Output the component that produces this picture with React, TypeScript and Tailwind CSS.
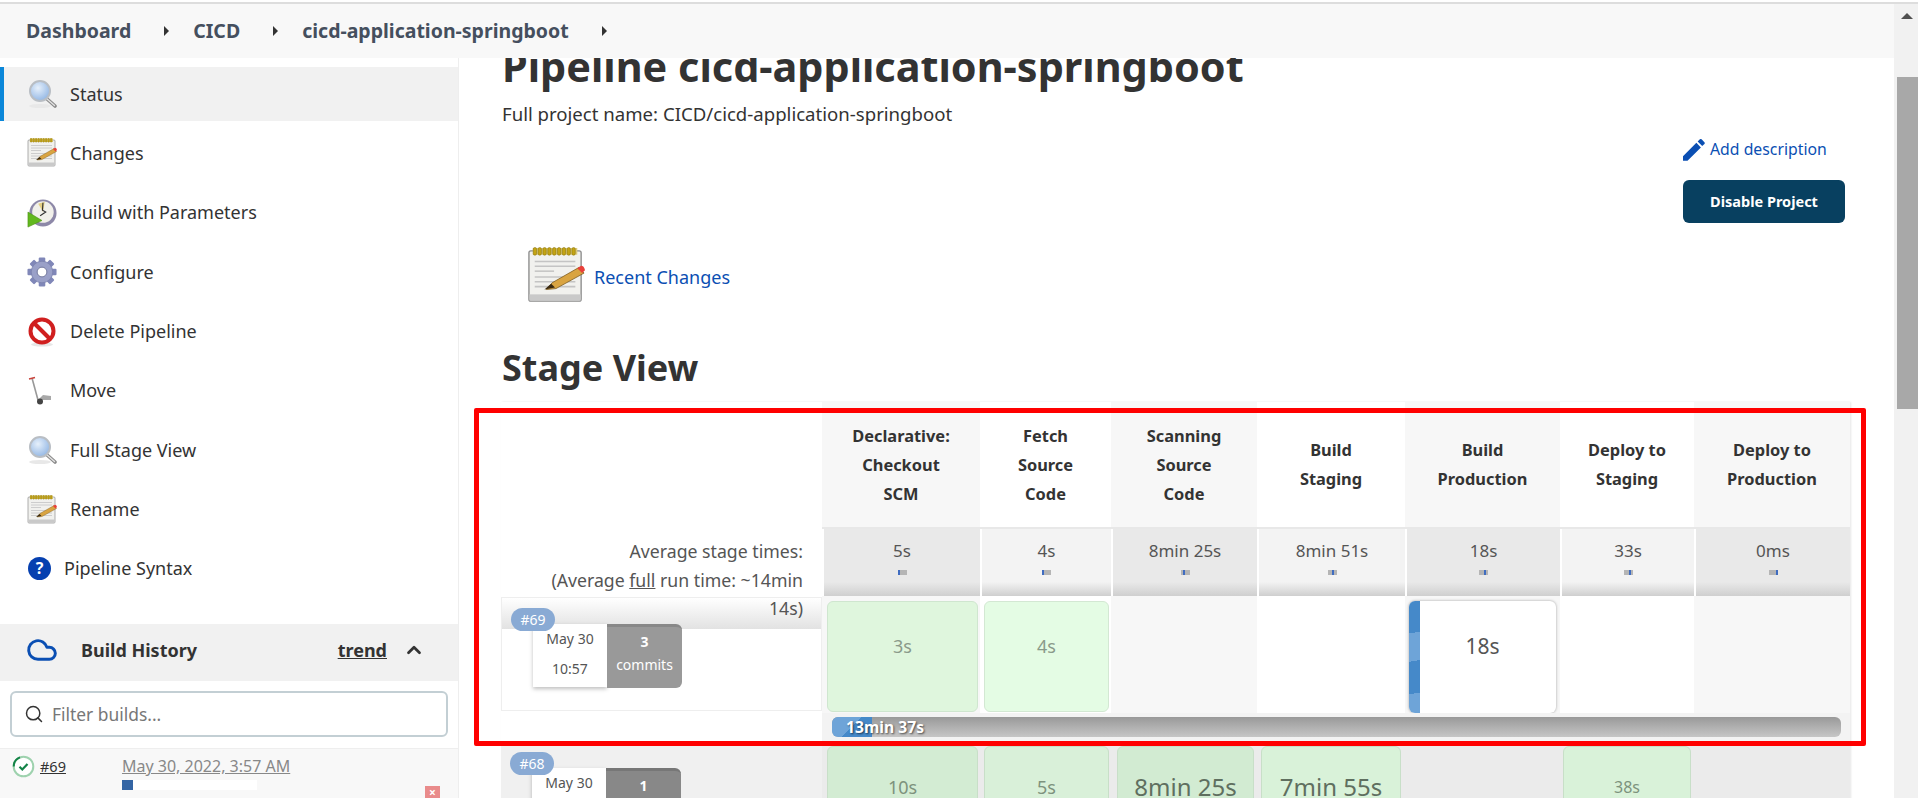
import React from 'react';
import { ChevronUp, Cloud, Search } from 'lucide-react';

const MagnifierIcon = () => (
  <svg width="30" height="30" viewBox="0 0 30 30">
    <defs>
      <radialGradient id="lens" cx="40%" cy="35%" r="70%">
        <stop offset="0%" stopColor="#e6f0fb" />
        <stop offset="100%" stopColor="#8fb4e3" />
      </radialGradient>
    </defs>
    <ellipse cx="13" cy="27" rx="11" ry="2" fill="#e8e8e8" />
    <line x1="19" y1="19" x2="28" y2="27" stroke="#8a8a8a" strokeWidth="3.6" strokeLinecap="round" />
    <line x1="19.5" y1="19.5" x2="27.5" y2="26.5" stroke="#e2e2e2" strokeWidth="1.4" strokeLinecap="round" />
    <circle cx="13" cy="12" r="10" fill="url(#lens)" stroke="#b9bec4" strokeWidth="2" />
  </svg>
);

const NotepadIcon = ({ size = 30 }: { size?: number }) => (
  <svg width={size} height={size} viewBox="0 0 60 60">
    <rect x="2" y="4" width="54" height="52" rx="2" fill="#f1f1ee" stroke="#8c8c8c" strokeWidth="1.4" />
    <rect x="2.5" y="49" width="53" height="6.5" fill="#c9c9c9" />
    <rect x="6" y="1" width="46" height="7" fill="#d9c878" />
    {[8, 13, 18, 23, 28, 33, 38, 43, 48].map((x) => (
      <rect key={x} x={x - 1.5} y="0.5" width="3.4" height="8" rx="1.6" fill="#c4a413" stroke="#7f6b0c" strokeWidth="0.5" />
    ))}
    {[15, 20, 31, 36, 41].map((y) => (
      <line key={y} x1="8" y1={y} x2="50" y2={y} stroke="#c4c4c4" strokeWidth="1.6" />
    ))}
    <line x1="8" y1="25" x2="28" y2="25" stroke="#c4c4c4" strokeWidth="1.6" />
    <path d="M20 44 L26 37 L54 21 L59 27 L30 43 Z" fill="#d9a441" stroke="#7b5a1c" strokeWidth="0.8" />
    <path d="M18 44 L25 38 L29 42 Z" fill="#3a2a12" />
    <path d="M52 22 L56 19.5 Q59 19.5 60 24 L57 27 Z" fill="#e8403a" />
  </svg>
);

const ClockIcon = () => (
  <svg width="32" height="32" viewBox="0 0 32 32">
    <circle cx="17" cy="16" r="14.5" fill="#8d88a8" />
    <circle cx="17" cy="15" r="11.5" fill="#f1f0ea" />
    <path d="M17 15 L12 6 L19 4 Z" fill="#e4cf83" />
    <path d="M17 5 L16.5 13 L20 15 L14 19" fill="none" stroke="#333" strokeWidth="1.2" />
    <path d="M1 15 L16 24 L1 31 Z" fill="#62b81e" stroke="#4c8f14" strokeWidth="0.6" />
  </svg>
);

const GearIcon = () => (
  <svg width="32" height="32" viewBox="0 0 32 32">
    {[0, 45, 90, 135, 180, 225, 270, 315].map((a) => (
      <rect key={a} x="12.5" y="0.5" width="7" height="8" rx="1.2" fill="#8087b8" transform={`rotate(${a} 16 16)`} />
    ))}
    <circle cx="16" cy="16" r="11.5" fill="#9aa0c8" stroke="#7a80ac" strokeWidth="0.8" />
    <circle cx="16" cy="16" r="5.2" fill="#fff" stroke="#6d7299" strokeWidth="1" />
  </svg>
);

const NoEntryIcon = () => (
  <svg width="30" height="30" viewBox="0 0 30 30">
    <ellipse cx="15" cy="27.5" rx="11" ry="2" fill="#e6e6e6" />
    <circle cx="15" cy="14" r="11.5" fill="#fff" stroke="#d01f1f" strokeWidth="4" />
    <line x1="7" y1="6" x2="23" y2="22" stroke="#d01f1f" strokeWidth="4" />
  </svg>
);

const MoveIcon = () => (
  <svg width="30" height="30" viewBox="0 0 30 30">
    <path d="M5 2 L11 24" stroke="#999" strokeWidth="1.6" fill="none" />
    <path d="M2 3 L8 1.5" stroke="#c8423a" strokeWidth="1.8" />
    <path d="M11 24 L24 24 L24 20 L16 19 Z" fill="#a8a8a8" />
    <circle cx="13" cy="25.5" r="3" fill="#444" />
  </svg>
);

const CheckIcon = () => (
  <svg width="23" height="23" viewBox="0 0 23 23">
    <circle cx="11.5" cy="11.5" r="9.8" fill="#fff" stroke="#9ed2ae" strokeWidth="2" />
    <path d="M1.7 11.5 A9.8 9.8 0 0 1 8 2.4" fill="none" stroke="#138347" strokeWidth="2" />
    <path d="M7.5 11.8 L10.3 14.5 L15.5 9" fill="none" stroke="#138347" strokeWidth="2.2" />
  </svg>
);

const PencilIcon = () => (
  <svg width="22" height="22" viewBox="3 3 18.2 18.2" fill="#0b4fb3">
    <path d="M3 17.25V21h3.75L17.81 9.94l-3.75-3.75L3 17.25zM20.71 7.04a1 1 0 0 0 0-1.41l-2.34-2.34a1 1 0 0 0-1.41 0l-1.83 1.83 3.75 3.75 1.83-1.83z" />
  </svg>
);

const Arrow = () => <span className="ml-[33px] mr-[24px] h-0 w-0 border-y-[5px] border-l-[5px] border-y-transparent border-l-[#333]" />;

const navItems = [
  { label: 'Status', icon: <MagnifierIcon />, active: true },
  { label: 'Changes', icon: <NotepadIcon /> },
  { label: 'Build with Parameters', icon: <ClockIcon /> },
  { label: 'Configure', icon: <GearIcon /> },
  { label: 'Delete Pipeline', icon: <NoEntryIcon /> },
  { label: 'Move', icon: <MoveIcon /> },
  { label: 'Full Stage View', icon: <MagnifierIcon /> },
  { label: 'Rename', icon: <NotepadIcon /> },
];

const stages = [
  { name: ['Declarative:', 'Checkout', 'SCM'], avg: '5s', blue: 0, tall: true },
  { name: ['Fetch', 'Source', 'Code'], avg: '4s', blue: 0, tall: true },
  { name: ['Scanning', 'Source', 'Code'], avg: '8min 25s', blue: 30, tall: true },
  { name: ['Build', 'Staging'], avg: '8min 51s', blue: 45 },
  { name: ['Build', 'Production'], avg: '18s', blue: 50 },
  { name: ['Deploy to', 'Staging'], avg: '33s', blue: 60 },
  { name: ['Deploy to', 'Production'], avg: '0ms', blue: 85 },
];

const previousRow = [
  { text: '10s', bg: 'bg-[#d3ecd3] text-[#7d927d] text-[18px] ml-[5px] mr-[2px]' },
  { text: '5s', bg: 'bg-[#d9f0d9] text-[#7d927d] text-[18px] ml-[4px] mr-[2px]' },
  { text: '8min 25s', bg: 'bg-[#d2ebd2] text-[#5f6f5f] text-[24px] ml-[6px] mr-[3px]' },
  { text: '7min 55s', bg: 'bg-[#d9f2d9] text-[#5f6f5f] text-[24px] mx-[4px]' },
  null,
  { text: '38s', bg: 'bg-[#d9f2d9] text-[#7d927d] text-[16px] mx-[3px]' },
  null,
];

function Sidebar() {
  return (
    <aside className="flex w-[459px] shrink-0 flex-col border-r border-[#eee] bg-white">
      <nav className="flex flex-col gap-[5.4px] pt-[9px]">
        {navItems.map((item) => (
          <a
            key={item.label}
            className={`flex h-[54px] items-center gap-[13px] border-l-4 pl-[23px] text-[18px] text-[#333] ${
              item.active ? 'border-[#0b87d9] bg-[#f1f1f1]' : 'border-transparent'
            }`}
          >
            <span className="flex w-[30px] justify-center">{item.icon}</span>
            {item.label}
          </a>
        ))}
        <a className="flex h-[54px] items-center gap-[13px] pb-[2px] pl-[28px] text-[18px] text-[#333]">
          <span className="flex h-[23px] w-[23px] items-center justify-center rounded-full bg-[#0640b0] text-[16px] font-bold text-white">?</span>
          Pipeline Syntax
        </a>
      </nav>

      <div className="mt-[28px] flex h-[57px] shrink-0 items-center bg-[#f1f1f1] pb-[5px] pl-[26px]">
        <Cloud className="h-[32px] w-[32px] text-[#0b4fb3]" strokeWidth={2.2} />
        <span className="ml-[23px] text-[18px] font-bold text-[#333]">Build History</span>
        <span className="ml-auto text-[18px] font-bold text-[#333] underline">trend</span>
        <ChevronUp className="ml-[16px] mr-[33px] h-[22px] w-[22px] text-[#333]" strokeWidth={3} />
      </div>

      <div className="mx-[10px] mt-[10px] flex h-[46px] shrink-0 items-center gap-[8px] rounded-md border-2 border-[#c3cfd4] pl-[12px] text-[17.4px] text-[#777]">
        <Search className="h-[20px] w-[20px] text-[#333]" strokeWidth={1.8} />
        Filter builds...
      </div>

      <div className="mt-[11px] flex flex-1 border-t border-[#eee] bg-[#f8f8f8] pl-[12px] pt-[6px]">
        <CheckIcon />
        <a className="ml-[5px] mt-[1px] h-fit text-[14.5px] text-[#333] underline">#69</a>
        <div className="ml-[56px] flex w-[167px] flex-col">
          <a className="whitespace-nowrap text-[16px] leading-[22px] text-[#888] underline">May 30, 2022, 3:57 AM</a>
          <div className="mt-[3px] h-[10px] w-[135px] bg-white">
            <div className="h-full w-[11px] bg-[#3465a4]" />
          </div>
        </div>
        <div className="ml-[136px] mt-[31px] flex h-[14px] w-[15px] items-center justify-center bg-[#e98b8b] text-[12px] font-bold leading-none text-white">×</div>
      </div>
    </aside>
  );
}

function BuildCard({ build, commits, label, dark }: { build: string; commits: string; label?: string; dark?: boolean }) {
  return (
    <>
      <span className="absolute left-[9px] top-[10px] z-10 flex h-[23px] w-[44px] items-center justify-center rounded-full bg-[#89aad4] text-[14px] text-white">
        {build}
      </span>
      <div className="ml-[31px] flex w-fit">
        <div className="flex h-[63px] w-[74px] flex-col items-center bg-white text-[14px] leading-[30px] text-[#555] shadow-[0_2px_4px_rgba(0,0,0,0.25)]">
          <span>May 30</span>
          <span>10:57</span>
        </div>
        <div
          className={`flex h-[64px] w-[75px] flex-col items-center rounded-r-md border-t-[3px] pt-[3px] text-white ${
            dark ? 'border-[#777] bg-[#888]' : 'border-[#888] bg-[#999]'
          }`}
        >
          <span className="text-[14px] font-bold leading-[24px]">{commits}</span>
          {label && <span className="text-[14px] leading-[22px]">{label}</span>}
        </div>
      </div>
    </>
  );
}

function StageTable() {
  return (
    <div className="relative ml-[-1px] mt-[10px] grid w-[1349px] grid-cols-[321px_158px_131px_146px_148px_155px_134px_156px] grid-rows-[127px_67px_117px_28px_60px] shadow-[1px_0_2px_rgba(0,0,0,0.1)]">
      {/* header row */}
      <div />
      {stages.map((s, i) => (
        <div
          key={s.name.join()}
          className={`flex flex-col items-center border-b-2 border-[#e8e8e8] text-[16.4px] font-bold leading-[29px] text-[#333] ${
            i % 2 === 0 ? 'bg-[#f7f7f7]' : 'bg-white'
          } ${s.tall ? 'pt-[19px]' : 'pt-[33px]'}`}
        >
          {s.name.map((line) => (
            <span key={line}>{line}</span>
          ))}
        </div>
      ))}

      {/* averages */}
      <div className="relative z-10 whitespace-nowrap pr-[19px] pt-[8px] text-right text-[17.7px] leading-[28.5px] text-[#555]">
        Average stage times:
        <br />
        (Average <span className="underline">full</span> run time: ~14min
        <br />
        14s)
      </div>
      {stages.map((s, i) => (
        <div
          key={s.avg}
          className={`ml-[2px] flex flex-col items-center bg-[linear-gradient(to_bottom,transparent,#cfcfcf)] bg-[length:100%_14px] bg-bottom bg-no-repeat pt-[10px] text-[17px] leading-[24px] text-[#555] ${
            i % 2 === 0 ? 'bg-[#e9e9e9]' : 'bg-[#f3f3f3]'
          }`}
        >
          {s.avg}
          <div className="relative mt-[7px] h-[5px] w-[9px] overflow-hidden bg-[#b5b5b5]">
            <div className="absolute top-0 h-full w-[2px] bg-[#3f6cc0]" style={{ left: `${s.blue}%` }} />
          </div>
        </div>
      ))}

      {/* build 69 */}
      <div className="pt-[1px]">
        <div className="relative h-[114px] border border-[#eee] bg-[linear-gradient(to_bottom,#fff,#e2e2e2)] bg-[length:100%_31px] bg-no-repeat pt-[26px]">
          <BuildCard build="#69" commits="3" label="commits" />
        </div>
      </div>
      <div className="bg-[#f7f7f7] pl-[5px] pr-[2px] pt-[5px]">
        <div className="flex h-[111px] w-full justify-center rounded-md border border-[#cfe6cf] bg-[#dff6dd] pt-[31px] text-[18px] text-[#8a9a8a]">3s</div>
      </div>
      <div className="bg-white pl-[4px] pr-[2px] pt-[5px]">
        <div className="flex h-[111px] w-full justify-center rounded-md border border-[#d3e8d3] bg-[#e4fce4] pt-[31px] text-[18px] text-[#8a9a8a]">4s</div>
      </div>
      <div className="bg-[#f7f7f7]" />
      <div className="bg-white" />
      <div className="bg-[#f7f7f7] px-[4px] pt-[5px]">
        <div className="flex h-[112px] overflow-hidden rounded-md bg-white shadow-[0_0_3px_rgba(0,0,0,0.35)]">
          <div className="h-full w-[11px] shrink-0 bg-[repeating-linear-gradient(170deg,#4589c9_0px,#4589c9_32px,#6ea4d8_32px,#6ea4d8_60px)]" />
          <div className="flex flex-1 justify-center pr-[11px] pt-[30px] text-[21px] text-[#555]">18s</div>
        </div>
      </div>
      <div className="bg-white" />
      <div className="bg-[#f7f7f7]" />

      {/* progress */}
      <div />
      <div className="col-span-7 bg-[#f3f3f3] pl-[10px] pr-[9px] pt-[4px]">
        <div className="relative h-[20px] overflow-hidden rounded-md bg-[linear-gradient(to_bottom,#999,#c6c6c6)]">
          <div className="h-full w-[40px] bg-[linear-gradient(135deg,#6ea4d8_0%,#6ea4d8_50%,#4589c9_50%,#4589c9_100%)]" />
          <span className="absolute left-[14px] top-0 text-[15.7px] font-bold leading-[20px] text-white [text-shadow:1px_1px_2px_rgba(0,0,0,0.6)]">13min 37s</span>
        </div>
      </div>

      {/* build 68 */}
      <div className="relative border-t border-[#ddd] bg-[#f0f0f0] pt-[26px]">
        <BuildCard build="#68" commits="1" dark />
      </div>
      {previousRow.map((cell, i) => (
        <div key={i} className="flex bg-[#ebebeb] pt-[5px]">
          {cell && (
            <div className={`flex h-[80px] flex-1 justify-center rounded-t-md border border-[#c8dfc8] pt-[26px] leading-[28px] ${cell.bg}`}>{cell.text}</div>
          )}
        </div>
      ))}

      {/* highlight drawn over the screenshot */}
      <div className="pointer-events-none absolute left-[-27px] top-[6px] z-20 h-[338px] w-[1392px] rounded-[2px] border-[5px] border-[#f00]" />
    </div>
  );
}

export default function App() {
  return (
    <div className="flex h-screen w-full flex-col overflow-hidden bg-white font-['Noto_Sans',sans-serif]">
      <div className="mt-[2px] h-[2px] w-full shrink-0 bg-[#ddd]" />
      <div className="flex min-h-0 flex-1">
        <div className="flex min-w-0 flex-1 flex-col">
          <header className="relative z-30 flex h-[54px] shrink-0 items-center bg-[#f8f8f8] pl-[26px] text-[19.5px] font-bold text-[#454f5e]">
            Dashboard
            <Arrow />
            CICD
            <Arrow />
            cicd-application-springboot
            <Arrow />
          </header>
          <div className="flex min-h-0 flex-1">
            <Sidebar />
            <main className="flex min-w-0 flex-1 flex-col overflow-hidden pl-[43px]">
              <h1 className="mt-[-16px] whitespace-nowrap text-[41.4px] font-bold leading-[48px] text-[#333]">Pipeline cicd-application-springboot</h1>
              <p className="mt-[12px] text-[18.6px] leading-[24px] text-[#333]">Full project name: CICD/cicd-application-springboot</p>
              <div className="ml-auto mr-[49px] mt-[12px] flex w-[162px] flex-col">
                <a className="flex h-[24px] items-center gap-[5px] whitespace-nowrap text-[15.8px] text-[#0b4fb3]">
                  <PencilIcon />
                  Add description
                </a>
                <button className="mt-[18px] h-[43px] rounded-md bg-[#084060] text-[14.5px] font-bold text-white">Disable Project</button>
              </div>
              <div className="ml-[25px] mt-[24px] flex h-[58px] items-center gap-[9px] text-[18px] text-[#0b4fb3]">
                <NotepadIcon size={58} />
                <span className="mt-[2px]">Recent Changes</span>
              </div>
              <h2 className="mt-[39px] text-[36px] font-bold leading-[48px] text-[#333]">Stage View</h2>
              <StageTable />
            </main>
          </div>
        </div>
        <div className="flex w-[24px] shrink-0 flex-col items-center bg-[#f1f1f1] pl-[2px]">
          <span className="mt-[9px] h-0 w-0 border-x-[6px] border-b-[6px] border-x-transparent border-b-[#505050]" />
          <div className="mt-[58px] h-[332px] w-[21px] bg-[#a8a8a8]" />
        </div>
      </div>
    </div>
  );
}
